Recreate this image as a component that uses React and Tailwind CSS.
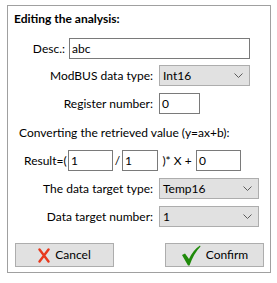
import React from "react";

const FONT = { fontFamily: 'Lato, "Noto Sans", sans-serif' };

function TextBox({ value, w }) {
  return (
    <div className={`h-[21px] ${w} border border-[#7a7a7a] bg-white flex items-center px-[2px] text-[12px] leading-[16px] text-black`}>
      {value}
    </div>
  );
}

function Select({ value, w }) {
  return (
    <div className={`h-[21px] ${w} border border-[#adadad] bg-[#e1e1e1] flex items-center justify-between pl-[3px] pr-[6px] text-[12px] leading-[16px] text-black`}>
      <span>{value}</span>
      <svg width="9" height="5" viewBox="0 0 9 5">
        <path d="M0.5 0.5 L4.5 4.5 L8.5 0.5" fill="none" stroke="#5c5c5c" strokeWidth="1" />
      </svg>
    </div>
  );
}

function Row({ label, labelW, gap, mt, children }) {
  return (
    <div className={`flex items-center h-[21px] ${mt}`}>
      <div className={`${labelW} shrink-0 whitespace-nowrap text-right text-[12px] leading-[16px] text-black`}>{label}</div>
      <div className={`${gap} shrink-0`} />
      {children}
    </div>
  );
}

function Button({ icon, label }) {
  return (
    <div className="h-[24px] w-[99px] border border-[#adadad] bg-[#e1e1e1] flex items-center justify-center gap-[5px] text-[12px] leading-[16px] text-black">
      {icon}
      <span>{label}</span>
    </div>
  );
}

const CrossIcon = (
  <svg width="12" height="15" viewBox="0 0 12 15">
    <path d="M1.5 1.5 L10.5 13.5 M10.5 1.5 L1.5 13.5" stroke="#e8391d" strokeWidth="2.4" strokeLinecap="round" fill="none" />
  </svg>
);

const CheckIcon = (
  <svg width="20" height="21" viewBox="0 0 20 21">
    <path d="M1 10 L4 8.5 L8 14 Q12 5 19 0.5 L19.5 1.5 Q13 8 8.5 20.5 L7 20.5 Z" fill="#1f8a0a" />
  </svg>
);

export default function App() {
  return (
    <div className="w-[277px] h-[283px] bg-white pt-[5px] pl-[7px]" style={FONT}>
      <div className="w-[264px] h-[268px] border border-[#a0a0a0] flex flex-col">
        <div className="pt-[5px] pl-[6px] whitespace-nowrap text-[12px] leading-[16px] font-bold text-black">
          Editing the analysis:
        </div>

        <Row label="Desc.:" labelW="w-[57px]" gap="w-[4px]" mt="mt-[11px]">
          <TextBox value="abc" w="w-[181px]" />
        </Row>
        <Row label="ModBUS data type:" labelW="w-[145px]" gap="w-[6px]" mt="mt-[6px]">
          <Select value="Int16" w="w-[91px]" />
        </Row>
        <Row label="Register number:" labelW="w-[145px]" gap="w-[6px]" mt="mt-[7px]">
          <TextBox value="0" w="w-[41px]" />
        </Row>

        <div className="mt-[11px] pl-[11px] whitespace-nowrap text-[12px] leading-[16px] text-black">
          Converting the retrieved value (y=ax+b):
        </div>

        <div className="mt-[9px] h-[21px] flex items-center pl-[16px] whitespace-nowrap text-[12px] leading-[16px] text-black">
          <span className="w-[44px] shrink-0">Result=(</span>
          <TextBox value="1" w="w-[45px]" />
          <span className="w-[9px] shrink-0 text-center">/</span>
          <TextBox value="1" w="w-[36px]" />
          <span className="w-[38px] shrink-0 text-center">)* X +</span>
          <TextBox value="0" w="w-[45px]" />
        </div>

        <Row label="The data target type:" labelW="w-[145px]" gap="w-[6px]" mt="mt-[7px]">
          <Select value="Temp16" w="w-[100px]" />
        </Row>
        <Row label="Data target number:" labelW="w-[145px]" gap="w-[6px]" mt="mt-[7px]">
          <Select value="1" w="w-[100px]" />
        </Row>

        <div className="mt-[16px] flex justify-between pl-[7px] pr-[6px]">
          <Button icon={CrossIcon} label="Cancel" />
          <Button icon={CheckIcon} label="Confirm" />
        </div>
      </div>
    </div>
  );
}
